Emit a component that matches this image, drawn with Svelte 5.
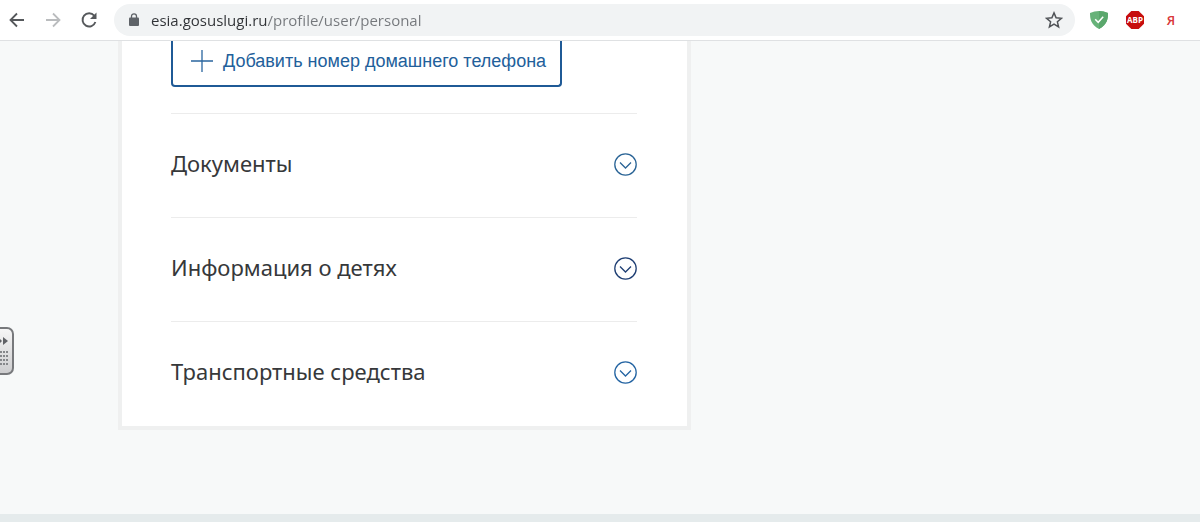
<script>
  let sections = $state([
    { title: 'Документы', color: '#2a6496', open: false },
    { title: 'Информация о детях', color: '#1f3f74', open: false },
    { title: 'Транспортные средства', color: '#2565a3', open: false }
  ]);
  let address = $state('esia.gosuslugi.ru/profile/user/personal');
</script>

<div class="page">
  <header class="toolbar">
    <nav class="nav">
      <button class="icon" aria-label="Назад">
        <svg width="18" height="18" viewBox="0 0 18 18" fill="none" stroke="#55585b" stroke-width="1.8"><path d="M16 9H3M9 2.5 2.5 9 9 15.5" /></svg>
      </button>
      <button class="icon" aria-label="Вперёд">
        <svg width="18" height="18" viewBox="0 0 18 18" fill="none" stroke="#babcbe" stroke-width="1.8"><path d="M2 9h13M9 2.5 15.500 9 9 15.500" /></svg>
      </button>
      <button class="icon" aria-label="Обновить">
        <svg width="18" height="18" viewBox="0 0 18 18"><path d="M14.200 4.600A6.600 6.600 0 1 0 15.400 11" fill="none" stroke="#55585b" stroke-width="1.9" /><path d="M16.500 1.500v6.500H10z" fill="#55585b" /></svg>
      </button>
    </nav>

    <div class="omnibox">
      <svg class="lock" width="10" height="14" viewBox="0 0 10 14"><rect x="0" y="4.500" width="10" height="8.500" rx="1" fill="#5f6368" /><path d="M2.500 5V3.300a2.500 2.500 0 0 1 5 0V5" fill="none" stroke="#5f6368" stroke-width="1.300" /></svg>
      <input class="address" type="text" aria-label="Адрес" spellcheck="false" bind:value={address} />
      <button class="icon" aria-label="Добавить в закладки">
        <svg width="18" height="18" viewBox="0 0 18 18" fill="none" stroke="#505357" stroke-width="1.500"><path d="m9 1.900 2.100 4.900 5.300.5-4 3.500 1.200 5.200L9 13.200 4.400 16l1.200-5.200-4-3.500 5.300-.5z" /></svg>
      </button>
    </div>

    <div class="extensions">
      <button class="icon" aria-label="Adguard">
        <svg width="18" height="18" viewBox="0 0 18 18"><path d="M9 0C6 0 2.800.8 0 2c0 5 .4 11.500 9 16 8.600-4.500 9-11 9-16C15.200.8 12 0 9 0z" fill="#67b279" /><path d="M9 0v18c8.600-4.500 9-11 9-16C15.200.8 12 0 9 0z" fill="#5aa76c" /><path d="m5.200 8.300 3 3 5-5.600" fill="none" stroke="#fff" stroke-width="1.500" /></svg>
      </button>
      <button class="icon" aria-label="Adblock Plus">
        <svg width="18" height="18" viewBox="0 0 18 18"><path d="M5.300 0h7.400L18 5.300v7.400L12.700 18H5.300L0 12.700V5.300z" fill="#c70d0d" /><text x="9" y="12" text-anchor="middle" class="abp">ABP</text></svg>
      </button>
      <button class="icon yandex" aria-label="Яндекс">Я</button>
    </div>
  </header>

  <main>
    <button class="drawer" aria-label="Открыть панель">
      <svg width="10" height="34" viewBox="0 0 10 34" fill="#606266">
        <path d="M3 3v8l5-4zM0 5l2 2-2 2z" />
        <path fill="#85878a" d="M0 17h2v2H0zM3 17h2v2H3zM6 17h2v2H6zM0 21h2v2H0zM3 21h2v2H3zM6 21h2v2H6zM0 25h2v2H0zM3 25h2v2H3zM6 25h2v2H6zM0 29h2v2H0zM3 29h2v2H3zM6 29h2v2H6z" />
      </svg>
    </button>

    <div class="card">
      <div class="phone">
        <button class="add">
          <svg width="24" height="24" viewBox="0 0 24 24" stroke="#2a669f" stroke-width="1.300"><path d="M12 1v22M1 12h22" /></svg>
          <span>Добавить номер домашнего телефона</span>
        </button>
      </div>
      {#each sections as section}
        <section>
          <h2>{section.title}</h2>
          <button class="toggle" aria-label={section.title} aria-expanded={section.open} onclick={() => (section.open = !section.open)}>
            <svg width="23" height="23" viewBox="0 0 23 23" fill="none" stroke={section.color} stroke-width="1.300"><circle cx="11.500" cy="11.500" r="10.700" /><path d="m6 9.500 5.500 5.500 5.500-5.500" /></svg>
          </button>
        </section>
      {/each}
    </div>
  </main>

  <footer></footer>
</div>

<style>
  :global(body) {
    background: #f7f9f9;
  }
  .page {
    display: flex;
    flex-direction: column;
    min-height: 100vh;
    font-family: "Noto Sans", "Open Sans", sans-serif;
  }
  button {
    padding: 0;
    border: 0;
    background: none;
    font: inherit;
    cursor: pointer;
  }
  svg {
    display: block;
  }
  .toolbar {
    display: flex;
    align-items: center;
    height: 40px;
    padding: 0 20px 0 8px;
    background: #fff;
    border-bottom: 1px solid #dfe1e3;
  }
  .nav {
    display: flex;
    gap: 18px;
    margin-right: 16px;
  }
  .icon {
    flex: none;
    width: 18px;
    height: 18px;
  }
  .omnibox {
    display: flex;
    flex: 1;
    align-items: center;
    height: 32px;
    padding: 0 12px 0 15px;
    border-radius: 16px;
    background: #f1f3f4;
  }
  .lock {
    flex: none;
    margin-right: 12px;
  }
  .address {
    flex: 1;
    min-width: 0;
    height: 24px;
    padding: 0;
    border: 0;
    outline: 0;
    font-family: "Open Sans", "Noto Sans", sans-serif;
    font-size: 15px;
    line-height: 24px;
    color: transparent;
    caret-color: #303236;
    background: linear-gradient(90deg, #303236 116px, #74777b 116px);
    background-clip: text;
    -webkit-background-clip: text;
  }
  .extensions {
    display: flex;
    gap: 18px;
    margin-left: 15px;
  }
  .abp {
    fill: #fff;
    font-family: "Open Sans", sans-serif;
    font-size: 8px;
    font-weight: 700;
  }
  .yandex {
    color: #d9383a;
    font-family: "Open Sans", sans-serif;
    font-size: 13px;
    font-weight: 600;
    line-height: 18px;
  }
  main {
    position: relative;
    flex: 1;
    padding: 0 24px 83px 118px;
  }
  .drawer {
    position: absolute;
    top: 286px;
    left: 0;
    display: flex;
    align-items: center;
    width: 14px;
    height: 48px;
    border: 2px solid #77797c;
    border-left: 0;
    border-radius: 0 7px 7px 0;
    background: linear-gradient(#f6f6f6, #cdcdcf);
  }
  .card {
    box-sizing: border-box;
    max-width: 573px;
    padding: 0 50px 1px 49px;
    border: 4px solid #eff0f0;
    border-top: 0;
    background: #fff;
  }
  .phone {
    padding-bottom: 26px;
  }
  .add {
    display: flex;
    align-items: center;
    gap: 9px;
    padding: 8px 14px 12px 17px;
    border: 2px solid #1f5a96;
    border-top: 0;
    border-radius: 0 0 4px 4px;
    color: #22609b;
    font-family: "Liberation Sans", Arial, sans-serif;
    font-size: 18px;
    line-height: 24px;
    text-align: left;
  }
  section {
    display: flex;
    align-items: center;
    justify-content: space-between;
    height: 101px;
    padding-bottom: 2px;
    border-top: 1px solid #ececec;
  }
  h2 {
    margin: 0;
    padding-bottom: 4px;
    color: #36383a;
    font-size: 22px;
    font-weight: 400;
    line-height: 32px;
  }
  footer {
    height: 8px;
    background: #e5ebec;
  }
</style>
